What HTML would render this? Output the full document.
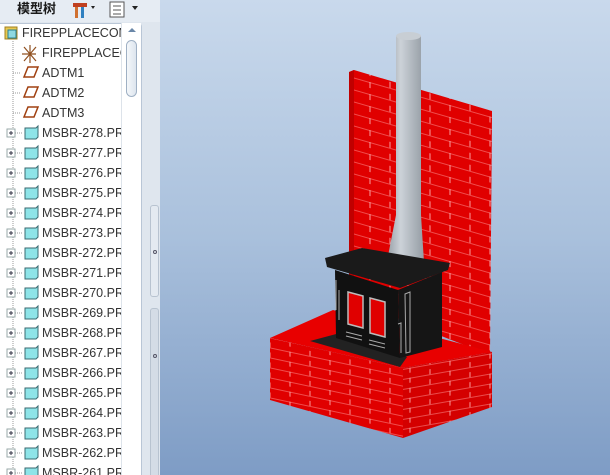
<!DOCTYPE html>
<html><head><meta charset="utf-8"><style>
*{margin:0;padding:0;box-sizing:border-box}
html,body{width:610px;height:475px;overflow:hidden}
body{position:relative;font-family:"Segoe UI","Liberation Sans","Noto Sans CJK SC",sans-serif;background:#dfe6ee}
#hdr{position:absolute;left:0;top:0;width:160px;height:22px;background:#e6ecf3}
#hdr .t{position:absolute;left:17px;top:-2px;font-size:13px;font-weight:bold;color:#1a1a1a;font-family:"Liberation Sans","Noto Sans CJK SC",sans-serif}
#tree{position:absolute;left:0;top:23px;width:142px;height:452px;background:#fff;border:1px solid #b9c6d6;border-left:none;border-bottom:none;border-radius:0 4px 0 0}
.row{position:absolute;left:0;height:20px;font-size:12.5px;color:#333;line-height:20px;white-space:nowrap;width:121px;overflow:hidden}
.row span{position:absolute;left:42px}
#sb{position:absolute;left:121px;top:23px;width:20px;height:452px;border-left:1px solid #dde3ea;background:#fff}
#thumb{position:absolute;left:126px;top:40px;width:11px;height:57px;border:1px solid #9fb0c4;border-radius:6px;background:linear-gradient(90deg,#f4f7fa,#dde5ee)}
#vp{position:absolute;left:160px;top:0;width:450px;height:475px;background:linear-gradient(#c9d9ec,#a9c0dc 50%,#7e9cc5)}
.sp{position:absolute;left:150px;width:9px;border:1px solid #b8c3d0;border-radius:3px;background:#e4eaf1}
</style></head><body>
<div id="hdr"><span class="t">模型树</span>
<svg style="position:absolute;left:70px;top:0" width="90" height="20">
<rect x="3" y="3" width="14" height="4" fill="#c04020"/><rect x="5" y="7" width="3" height="11" fill="#d07030"/><rect x="11" y="7" width="3" height="11" fill="#3080c0"/>
<path d="M21 6l4 0-2 3z" fill="#222"/>
<rect x="40" y="2" width="14" height="15" fill="#fff" stroke="#555"/><path d="M43 6h8M43 10h8M43 14h8" stroke="#555"/>
<path d="M62 6l6 0-3 4z" fill="#222"/></svg></div>
<div id="tree"></div>
<div id="sb"></div>
<div id="thumb"></div>
<svg style="position:absolute;left:127px;top:26px" width="10" height="8"><path d="M1 6l4-4 4 4z" fill="#6a87a8"/></svg>
<div style="position:absolute;left:0;top:23px;width:121px;height:452px;overflow:hidden">
<svg style="position:absolute;left:0;top:0" width="121" height="452">
<path d="M13 18V452" stroke="#999" stroke-dasharray="1,1"/>
<path d="M13 50h8M13 70h8M13 90h8" stroke="#999" stroke-dasharray="1,1"/>
<rect x="5" y="4" width="12" height="12" fill="#e8c850" stroke="#a08020"/><rect x="8" y="7" width="8" height="8" fill="#8ed8e0" stroke="#2a8090"/>
<path d="M24 24l12 14M24 38l12-14M30 22v18M22 31h14" stroke="#905020" stroke-width="1.2"/>
<path d="M28 44h10l-4 10h-10z" fill="none" stroke="#a04010" stroke-width="1.5"/>
<path d="M28 64h10l-4 10h-10z" fill="none" stroke="#a04010" stroke-width="1.5"/>
<path d="M28 84h10l-4 10h-10z" fill="none" stroke="#a04010" stroke-width="1.5"/>
</svg></div>
<div class="row" style="top:23px"><span style="left:22px">FIREPPLACECOM</span></div>
<div class="row" style="top:43px"><span>FIREPPLACECO</span></div>
<div class="row" style="top:63px"><span>ADTM1</span></div>
<div class="row" style="top:83px"><span>ADTM2</span></div>
<div class="row" style="top:103px"><span>ADTM3</span></div>
<svg style="position:absolute;left:0;top:123px" width="121" height="352">
<g id="it"><rect x="7" y="6" width="8" height="8" fill="#fff" stroke="#9aa"/><path d="M9 10h4M11 8v4" stroke="#334"/><path d="M15 10h8" stroke="#999" stroke-dasharray="1,1"/><path d="M25 5h11l2-2v11l-2 2h-11z" fill="#8ee4e8" stroke="#3a6a70"/></g>
<use href="#it" y="20"/><use href="#it" y="40"/><use href="#it" y="60"/><use href="#it" y="80"/><use href="#it" y="100"/><use href="#it" y="120"/><use href="#it" y="140"/><use href="#it" y="160"/><use href="#it" y="180"/><use href="#it" y="200"/><use href="#it" y="220"/><use href="#it" y="240"/><use href="#it" y="260"/><use href="#it" y="280"/><use href="#it" y="300"/><use href="#it" y="320"/><use href="#it" y="340"/>
</svg>
<div class="row" style="top:123px"><span>MSBR-278.PR</span></div>
<div class="row" style="top:143px"><span>MSBR-277.PR</span></div>
<div class="row" style="top:163px"><span>MSBR-276.PR</span></div>
<div class="row" style="top:183px"><span>MSBR-275.PR</span></div>
<div class="row" style="top:203px"><span>MSBR-274.PR</span></div>
<div class="row" style="top:223px"><span>MSBR-273.PR</span></div>
<div class="row" style="top:243px"><span>MSBR-272.PR</span></div>
<div class="row" style="top:263px"><span>MSBR-271.PR</span></div>
<div class="row" style="top:283px"><span>MSBR-270.PR</span></div>
<div class="row" style="top:303px"><span>MSBR-269.PR</span></div>
<div class="row" style="top:323px"><span>MSBR-268.PR</span></div>
<div class="row" style="top:343px"><span>MSBR-267.PR</span></div>
<div class="row" style="top:363px"><span>MSBR-266.PR</span></div>
<div class="row" style="top:383px"><span>MSBR-265.PR</span></div>
<div class="row" style="top:403px"><span>MSBR-264.PR</span></div>
<div class="row" style="top:423px"><span>MSBR-263.PR</span></div>
<div class="row" style="top:443px"><span>MSBR-262.PR</span></div>
<div class="row" style="top:463px"><span>MSBR-261.PR</span></div>
<div class="sp" style="top:205px;height:92px"></div>
<div class="sp" style="top:308px;height:170px;background:#d4dce6"></div>
<div style="position:absolute;left:153px;top:250px;width:4px;height:4px;border:1px solid #556;border-radius:50%"></div>
<div style="position:absolute;left:153px;top:354px;width:4px;height:4px;border:1px solid #556;border-radius:50%"></div>
<div id="vp"></div>
<svg style="position:absolute;left:0;top:0" width="610" height="475">
<defs>
<pattern id="bw" width="40" height="12" patternUnits="userSpaceOnUse" patternTransform="skewY(16)">
<rect width="40" height="12" fill="#e00000"/><path d="M0 0.5h40" stroke="#ff9a9a" stroke-width="0.5"/><path d="M10 0v6M30 6v6" stroke="#ffc0c0" stroke-width="0.8"/></pattern>
<pattern id="bf" width="40" height="10" patternUnits="userSpaceOnUse" patternTransform="skewY(12)">
<rect width="40" height="10" fill="#e00000"/><path d="M0 0.5h40" stroke="#ff9a9a" stroke-width="0.5"/><path d="M10 0v5M30 5v5" stroke="#ffc0c0" stroke-width="0.8"/></pattern>
<pattern id="br" width="40" height="10" patternUnits="userSpaceOnUse" patternTransform="skewY(-10)">
<rect width="40" height="10" fill="#d40000"/><path d="M0 0.5h40" stroke="#ff9a9a" stroke-width="0.5"/><path d="M10 0v5M30 5v5" stroke="#ffc0c0" stroke-width="0.8"/></pattern>
<linearGradient id="pg" x1="0" x2="1"><stop offset="0" stop-color="#9aa2aa"/><stop offset="0.35" stop-color="#ccd2d8"/><stop offset="1" stop-color="#949ca4"/></linearGradient>
</defs>
<polygon points="349,72 354,70 492,111 492,115 490,355 349,300" fill="url(#bw)"/>
<polygon points="349,72 354,70 354,302 349,300" fill="#c00000"/>
<polygon points="270,338 333,310 492,352 403,368" fill="#e80000"/>
<polygon points="270,338 403,368 403,438 270,400" fill="url(#bf)"/>
<polygon points="403,368 492,352 492,407 403,438" fill="url(#br)"/>
<polygon points="310,341 340,333 407,357 400,367" fill="#222"/>
<polygon points="396,36 421,36 421,215 424,262 388,256 396,215" fill="url(#pg)"/>
<ellipse cx="408.5" cy="36" rx="12.5" ry="4" fill="#c8ced4"/>
<polygon points="335,270 398,290 400,358 336,338" fill="#111"/>
<polygon points="398,290 442,272 442,347 400,358" fill="#151515"/>
<polygon points="325,258 362,248 450,263 448,270 400,288 327,267" fill="#1a1a1a"/>
<polygon points="348,292 363,296 363,328 348,324" fill="#e00000" stroke="#bbb" stroke-width="1.5"/>
<polygon points="370,298 385,302 385,337 370,333" fill="#e00000" stroke="#bbb" stroke-width="1.5"/>
<path d="M346 332l16 4M346 336l16 4M369 340l16 4M369 344l16 4" stroke="#aaa"/>
<path d="M405 294l5-2v60l-4 1z" fill="none" stroke="#aaa"/>
<path d="M398 324l3 -1v30" fill="none" stroke="#aaa"/>
<path d="M336 280v30M339 290v30" stroke="#aaa"/>
</svg>
</body></html>
